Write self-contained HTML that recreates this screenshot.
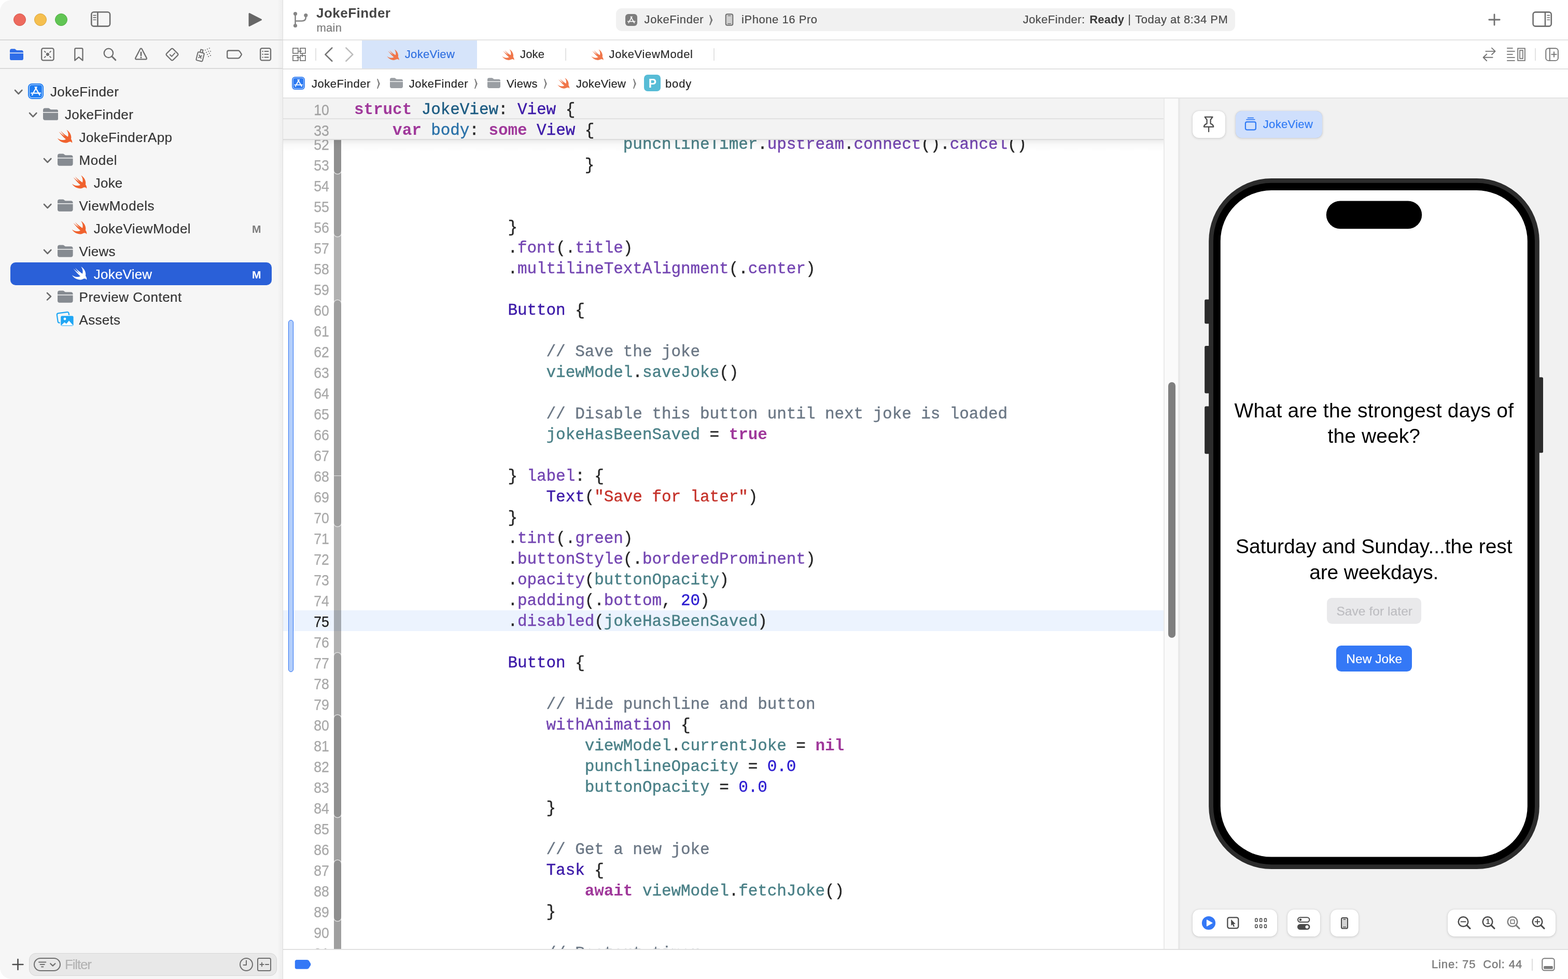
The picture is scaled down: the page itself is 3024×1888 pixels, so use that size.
<!DOCTYPE html>
<html lang="en"><head><meta charset="utf-8"><title>JokeFinder — JokeView.swift</title>
<style>
html,body{margin:0;padding:0;}
body{width:3024px;height:1888px;overflow:hidden;position:relative;background:#fff;font-family:"Liberation Sans", sans-serif;}
div,svg{box-sizing:border-box;}
.c{position:absolute;font-family:"Liberation Mono", monospace;font-size:31px;line-height:40px;letter-spacing:-0.074px;white-space:pre;color:#262626;-webkit-text-stroke:0.4px currentColor;}
.k{color:#a0399b;font-weight:700;-webkit-text-stroke:0} .t{color:#1c5b82} .s{color:#3c1aa8} .d{color:#2a71a8}
.p{color:#4a8087} .f{color:#7446b2} .m{color:#6b7785} .q{color:#c5322a} .n{color:#2b1bd0}
</style></head><body>
<div style="position:absolute;left:0px;top:0px;width:3024px;height:1888px;background:#ffffff;"></div>
<div style="position:absolute;left:0px;top:0px;width:545px;height:1888px;background:#f6f6f6;border-radius:22px 0 0 22px;"></div>
<div style="position:absolute;left:535px;top:0px;width:10px;height:1888px;background:linear-gradient(90deg,rgba(0,0,0,0),rgba(0,0,0,0.035));"></div>
<div style="position:absolute;left:545px;top:0px;width:1px;height:1888px;background:#dcdcdc;"></div>
<div style="position:absolute;left:0px;top:76px;width:545px;height:2px;background:#d9d9d9;"></div>
<div style="position:absolute;left:546px;top:76px;width:2478px;height:2px;background:#e4e4e4;"></div>
<div style="position:absolute;left:0px;top:131px;width:545px;height:2px;background:#dadada;"></div>
<div style="position:absolute;left:546px;top:132px;width:2478px;height:2px;background:#e2e2e2;"></div>
<div style="position:absolute;left:546px;top:188px;width:2478px;height:2px;background:#e4e4e4;"></div>
<div style="position:absolute;left:546px;top:1830px;width:2478px;height:2px;background:#e0e0e0;"></div>
<div style="position:absolute;left:26px;top:26px;width:24px;height:24px;border-radius:50%;background:#ed6a5e;border:1px solid #d5574c;"></div>
<div style="position:absolute;left:66px;top:26px;width:24px;height:24px;border-radius:50%;background:#f5bf4f;border:1px solid #d9a53c;"></div>
<div style="position:absolute;left:106px;top:26px;width:24px;height:24px;border-radius:50%;background:#61c554;border:1px solid #4fae43;"></div>
<svg style="position:absolute;left:173px;top:20px;" width="43" height="34" viewBox="173 20 43 34"><rect x="176.3" y="23.3" width="35.8" height="27.3" rx="4.6" fill="none" stroke="#6e6e6e" stroke-width="2.6"/><path d="M188.4 23.5V50.5" stroke="#6e6e6e" stroke-width="2.6"/><path d="M180 29.6h5M180 33.9h5M180 38.2h5" stroke="#6e6e6e" stroke-width="1.6" stroke-linecap="round"/></svg>
<svg style="position:absolute;left:476px;top:22px;" width="32" height="32" viewBox="476 22 32 32"><path d="M481 26.5L503.5 38L481 49.5Z" fill="#666" stroke="#666" stroke-width="3" stroke-linejoin="round"/></svg>
<svg style="position:absolute;left:19px;top:93.8px;" width="26" height="22.3" viewBox="0 0 30 24" preserveAspectRatio="none"><path d="M0 4.2C0 1.9 1.5 .4 3.8 .4h6.1c1.3 0 2 .3 2.9 1.1l1.2 1c.6.5 1 .7 1.9.7h10.3C28.5 3.2 30 4.7 30 7v1H0z" fill="#2f6de8"/><path d="M0 9.6h30v10.6c0 2.3-1.5 3.8-3.8 3.8H3.8C1.5 24 0 22.5 0 20.2z" fill="#2f6de8"/></svg>
<svg style="position:absolute;left:76px;top:89px;" width="32" height="32" viewBox="76 89 32 32"><rect x="80.2" y="93.2" width="23.4" height="23.2" rx="3.2" fill="none" stroke="#6e6e6e" stroke-width="2.3" stroke-linecap="round" stroke-linejoin="round"/><circle cx="91.9" cy="104.8" r="3.1" fill="#6e6e6e"/><path d="M85.3 98.3l3 3M98.5 98.3l-3 3M85.3 111.3l3-3M98.5 111.3l-3-3" fill="none" stroke="#6e6e6e" stroke-width="1.9"/></svg>
<svg style="position:absolute;left:140px;top:89px;" width="24" height="32" viewBox="140 89 24 32"><path d="M144.3 116.6V95.4a2.2 2.2 0 0 1 2.2-2.2h10.8a2.2 2.2 0 0 1 2.2 2.2v21.2l-7.6-6.4z" fill="none" stroke="#6e6e6e" stroke-width="2.3" stroke-linecap="round" stroke-linejoin="round"/></svg>
<svg style="position:absolute;left:196px;top:89px;" width="32" height="32" viewBox="196 89 32 32"><circle cx="209.4" cy="102.4" r="8.7" fill="none" stroke="#6e6e6e" stroke-width="2.3" stroke-linecap="round" stroke-linejoin="round"/><path d="M215.8 108.8l7 7" fill="none" stroke="#6e6e6e" stroke-width="3" stroke-linecap="round"/></svg>
<svg style="position:absolute;left:256px;top:89px;" width="32" height="32" viewBox="256 89 32 32"><path d="M270.5 94.3a1.7 1.7 0 0 1 3 0l9.2 17.6a1.7 1.7 0 0 1-1.5 2.5h-18.4a1.7 1.7 0 0 1-1.5-2.5z" fill="none" stroke="#6e6e6e" stroke-width="2.3" stroke-linecap="round" stroke-linejoin="round"/><path d="M272 100.9v6.1" fill="none" stroke="#6e6e6e" stroke-width="2.8" stroke-linecap="round"/><circle cx="272" cy="110.9" r="1.55" fill="#6e6e6e"/></svg>
<svg style="position:absolute;left:316px;top:89px;" width="32" height="32" viewBox="316 89 32 32"><path d="M330.3 94.3a2.4 2.4 0 0 1 3.4 0l9 9a2.4 2.4 0 0 1 0 3.4l-9 9a2.4 2.4 0 0 1-3.4 0l-9-9a2.4 2.4 0 0 1 0-3.4z" fill="none" stroke="#6e6e6e" stroke-width="2.3" stroke-linecap="round" stroke-linejoin="round"/><path d="M327.8 105.5l3.4 3.3 5.9-6.5" fill="none" stroke="#6e6e6e" stroke-width="2" stroke-linecap="round" stroke-linejoin="round"/></svg>
<svg style="position:absolute;left:374px;top:88px;" width="36" height="34" viewBox="374 88 36 34"><g transform="translate(-1.4 0.2) rotate(14 388 108)"><rect x="381.5" y="101" width="12.5" height="16.5" rx="2.2" fill="none" stroke="#6e6e6e" stroke-width="2" stroke-linecap="round" stroke-linejoin="round"/><path d="M385.6 101V95.4H390V101" fill="none" stroke="#6e6e6e" stroke-width="2" stroke-linecap="round" stroke-linejoin="round"/><path d="M385.3 106.8l4.8 4.8M390.1 106.8l-4.8 4.8" fill="none" stroke="#6e6e6e" stroke-width="2" stroke-linecap="round" stroke-linejoin="round"/></g><g fill="#6e6e6e"><rect x="403.0" y="92.0" width="1.8" height="1.8" rx=".4"/><rect x="399.2" y="93.8" width="1.8" height="1.8" rx=".4"/><rect x="395.0" y="95.8" width="1.8" height="1.8" rx=".4"/><rect x="401.2" y="98.0" width="1.8" height="1.8" rx=".4"/><rect x="405.1" y="98.0" width="1.8" height="1.8" rx=".4"/><rect x="397.2" y="100.1" width="1.8" height="1.8" rx=".4"/><rect x="403.0" y="101.9" width="1.8" height="1.8" rx=".4"/><rect x="399.2" y="104.1" width="1.8" height="1.8" rx=".4"/><rect x="405.1" y="106.1" width="1.8" height="1.8" rx=".4"/><rect x="401.2" y="108.1" width="1.8" height="1.8" rx=".4"/></g></svg>
<svg style="position:absolute;left:434px;top:92px;" width="36" height="26" viewBox="434 92 36 26"><path d="M441 97.5H459Q461 97.5 462.2 99.2L465.6 104.2Q466.2 105 465.6 105.8L462.2 110.8Q461 112.4 459 112.4H441Q438.2 112.4 438.2 109.6V100.3Q438.2 97.5 441 97.5Z" fill="none" stroke="#6e6e6e" stroke-width="2.3" stroke-linecap="round" stroke-linejoin="round"/></svg>
<svg style="position:absolute;left:498px;top:89px;" width="28" height="32" viewBox="498 89 28 32"><rect x="502.2" y="93.2" width="19.8" height="23.2" rx="3" fill="none" stroke="#6e6e6e" stroke-width="2.3" stroke-linecap="round" stroke-linejoin="round"/><path d="M510.5 99h7M510.5 104.8h7M510.5 110.6h7" fill="none" stroke="#6e6e6e" stroke-width="2" stroke-linecap="round" stroke-linejoin="round"/><circle cx="506.6" cy="99" r="1.2" fill="#6e6e6e"/><circle cx="506.6" cy="104.8" r="1.2" fill="#6e6e6e"/><circle cx="506.6" cy="110.6" r="1.2" fill="#6e6e6e"/></svg>
<svg style="position:absolute;left:562px;top:19px;" width="36" height="38" viewBox="562 19 36 38"><circle cx="569.5" cy="26.5" r="3.6" fill="#858585"/><circle cx="569.5" cy="49.5" r="3.6" fill="#858585"/><circle cx="589.8" cy="29.5" r="3.6" fill="#858585"/><path d="M569.5 26.5V49.5M569.5 40.5h12.3Q589.8 40.5 589.8 33.5V29.5" fill="none" stroke="#858585" stroke-width="2.6" stroke-linejoin="round"/></svg>
<div style="position:absolute;left:610.00px;top:11.99px;font-family:'Liberation Sans', sans-serif;font-size:26px;line-height:26px;font-weight:700;color:#464646;white-space:pre;letter-spacing:0.476px;">JokeFinder</div>
<div style="position:absolute;left:610.50px;top:43.38px;font-family:'Liberation Sans', sans-serif;font-size:22px;line-height:22px;font-weight:400;color:#7c7c7c;white-space:pre;letter-spacing:0.271px;-webkit-text-stroke:0.22px currentColor;">main</div>
<div style="position:absolute;left:1188px;top:16px;width:1193.5px;height:43.6px;background:#f1f1f1;border-radius:11px;"></div>
<svg style="position:absolute;left:1206px;top:26.5px;" width="23" height="23" viewBox="0 0 30 30"><rect x="0" y="0" width="30" height="30" rx="7.4" fill="#7d7d7d"/><g stroke="#fff" stroke-width="2.2" stroke-linecap="round" fill="none"><path d="M16.7 6.9L10.3 18"/><path d="M13.7 6.9L22.6 22.3"/><path d="M6.2 18.7H24.2"/><path d="M8.9 20.9L8.2 22.2"/></g></svg>
<div style="position:absolute;left:1242.60px;top:27.48px;font-family:'Liberation Sans', sans-serif;font-size:22px;line-height:22px;font-weight:400;color:#4a4a4a;white-space:pre;letter-spacing:0.573px;-webkit-text-stroke:0.22px currentColor;">JokeFinder</div>
<svg style="position:absolute;left:1367.4px;top:27.8px;" width="8.4" height="21.6" viewBox="-1 -1 8.4 21.6"><path d="M0 0L1.92 0L6.4 9.8L1.92 19.6L0 19.6L3.01 9.8Z" fill="#777777"/></svg>
<svg style="position:absolute;left:1396px;top:24px;" width="22" height="28" viewBox="1396 24 22 28"><rect x="1399.7" y="27.2" width="13.6" height="21.6" rx="3" fill="#cfcfcf" stroke="#6f6f6f" stroke-width="2"/><path d="M1404.3 30.4h4.4M1403.8 45.7h5.4" stroke="#6f6f6f" stroke-width="1.4" stroke-linecap="round"/></svg>
<div style="position:absolute;left:1430.00px;top:27.48px;font-family:'Liberation Sans', sans-serif;font-size:22px;line-height:22px;font-weight:400;color:#4a4a4a;white-space:pre;letter-spacing:0.547px;-webkit-text-stroke:0.22px currentColor;">iPhone 16 Pro</div>
<div style="position:absolute;left:1972.70px;top:27.28px;font-family:'Liberation Sans', sans-serif;font-size:22px;line-height:22px;font-weight:400;color:#4a4a4a;white-space:pre;letter-spacing:0.455px;-webkit-text-stroke:0.22px currentColor;">JokeFinder:</div>
<div style="position:absolute;left:2101.30px;top:27.28px;font-family:'Liberation Sans', sans-serif;font-size:22px;line-height:22px;font-weight:700;color:#3a3a3a;white-space:pre;letter-spacing:0.163px;">Ready</div>
<div style="position:absolute;left:2175.20px;top:25.98px;font-family:'Liberation Sans', sans-serif;font-size:22px;line-height:22px;font-weight:400;color:#4a4a4a;white-space:pre;-webkit-text-stroke:0.22px currentColor;">|</div>
<div style="position:absolute;left:2189.30px;top:27.28px;font-family:'Liberation Sans', sans-serif;font-size:22px;line-height:22px;font-weight:400;color:#4a4a4a;white-space:pre;letter-spacing:0.485px;-webkit-text-stroke:0.22px currentColor;">Today at 8:34 PM</div>
<svg style="position:absolute;left:2866px;top:22px;" width="32" height="32" viewBox="2866 22 32 32"><path d="M2871.8 38h20.4M2882 27.8v20.4" stroke="#707070" stroke-width="2.8" stroke-linecap="round"/></svg>
<svg style="position:absolute;left:2952px;top:19px;" width="44" height="36" viewBox="2952 19 44 36"><rect x="2956.6" y="23.4" width="35.2" height="27.2" rx="4.6" fill="none" stroke="#6e6e6e" stroke-width="2.6"/><path d="M2980 23.5V50.5" stroke="#6e6e6e" stroke-width="2.6"/><path d="M2984 29.6h4.6M2984 34h4.6M2984 38.3h4.6" stroke="#6e6e6e" stroke-width="1.6" stroke-linecap="round"/></svg>
<svg style="position:absolute;left:562px;top:90px;" width="30" height="30" viewBox="562 90 30 30"><rect x="564.95" y="92.95" width="9.9" height="9.9" fill="none" stroke="#737373" stroke-width="1.7"/><rect x="579.05" y="92.95" width="9.9" height="9.9" fill="none" stroke="#737373" stroke-width="1.7"/><rect x="564.95" y="107.05" width="9.9" height="9.9" fill="none" stroke="#737373" stroke-width="1.7"/><rect x="579.05" y="107.05" width="9.9" height="9.9" fill="none" stroke="#737373" stroke-width="1.7"/><path d="M575.5 98.9h6.4M583 103.2v6.5M572.3 110.8h6.4" stroke="#737373" stroke-width="1.7" fill="none"/></svg>
<div style="position:absolute;left:608px;top:93px;width:2px;height:24px;background:#e3e3e3;"></div>
<svg style="position:absolute;left:622px;top:88px;" width="24" height="34" viewBox="622 88 24 34"><path d="M640.3 92.4L627.4 105.1L640.3 117.8" fill="none" stroke="#757575" stroke-width="2.7" stroke-linecap="round" stroke-linejoin="round"/></svg>
<svg style="position:absolute;left:662px;top:88px;" width="24" height="34" viewBox="662 88 24 34"><path d="M667.4 92.4L680.3 105.1L667.4 117.8" fill="none" stroke="#bdbdbd" stroke-width="2.7" stroke-linecap="round" stroke-linejoin="round"/></svg>
<div style="position:absolute;left:698px;top:78px;width:222px;height:54px;background:#d6e4fa;"></div>
<svg style="position:absolute;left:746px;top:94.5px;overflow:visible;" width="24" height="21.5" viewBox="2.3 3.3 18.4 16.7"><path d="M13.543 3.41c4.114 2.47 6.545 7.162 5.549 11.131-.024.093-.05.181-.076.272l.002.001c2.062 2.538 1.5 5.258 1.236 4.745-1.072-2.086-3.066-1.568-4.088-1.043a6.803 6.803 0 0 1-.281.158l-.02.012-.002.002c-2.115 1.123-4.957 1.205-7.812-.022a12.568 12.568 0 0 1-5.64-4.838c.649.48 1.35.902 2.097 1.252 3.019 1.414 6.051 1.311 8.197-.002C9.651 12.73 7.101 9.67 5.146 7.191a10.628 10.628 0 0 1-1.005-1.384c2.34 2.142 6.038 4.83 7.365 5.576C8.69 8.408 6.208 4.743 6.324 4.86c4.436 4.47 8.528 6.996 8.528 6.996.154.085.27.154.36.213.085-.215.16-.437.224-.668.708-2.588-.09-5.548-1.893-7.992z" fill="#f0764a"/></svg>
<div style="position:absolute;left:780.80px;top:94.48px;font-family:'Liberation Sans', sans-serif;font-size:22px;line-height:22px;font-weight:400;color:#2f6fe0;white-space:pre;letter-spacing:0.319px;-webkit-text-stroke:0.22px currentColor;">JokeView</div>
<svg style="position:absolute;left:968px;top:94.5px;overflow:visible;" width="24" height="21.5" viewBox="2.3 3.3 18.4 16.7"><path d="M13.543 3.41c4.114 2.47 6.545 7.162 5.549 11.131-.024.093-.05.181-.076.272l.002.001c2.062 2.538 1.5 5.258 1.236 4.745-1.072-2.086-3.066-1.568-4.088-1.043a6.803 6.803 0 0 1-.281.158l-.02.012-.002.002c-2.115 1.123-4.957 1.205-7.812-.022a12.568 12.568 0 0 1-5.64-4.838c.649.48 1.35.902 2.097 1.252 3.019 1.414 6.051 1.311 8.197-.002C9.651 12.73 7.101 9.67 5.146 7.191a10.628 10.628 0 0 1-1.005-1.384c2.34 2.142 6.038 4.83 7.365 5.576C8.69 8.408 6.208 4.743 6.324 4.86c4.436 4.47 8.528 6.996 8.528 6.996.154.085.27.154.36.213.085-.215.16-.437.224-.668.708-2.588-.09-5.548-1.893-7.992z" fill="#f0764a"/></svg>
<div style="position:absolute;left:1003.00px;top:94.48px;font-family:'Liberation Sans', sans-serif;font-size:22px;line-height:22px;font-weight:400;color:#2b2b2b;white-space:pre;letter-spacing:0.172px;-webkit-text-stroke:0.22px currentColor;">Joke</div>
<div style="position:absolute;left:1090px;top:93px;width:2px;height:24px;background:#e3e3e3;"></div>
<svg style="position:absolute;left:1140px;top:94.5px;overflow:visible;" width="24" height="21.5" viewBox="2.3 3.3 18.4 16.7"><path d="M13.543 3.41c4.114 2.47 6.545 7.162 5.549 11.131-.024.093-.05.181-.076.272l.002.001c2.062 2.538 1.5 5.258 1.236 4.745-1.072-2.086-3.066-1.568-4.088-1.043a6.803 6.803 0 0 1-.281.158l-.02.012-.002.002c-2.115 1.123-4.957 1.205-7.812-.022a12.568 12.568 0 0 1-5.64-4.838c.649.48 1.35.902 2.097 1.252 3.019 1.414 6.051 1.311 8.197-.002C9.651 12.73 7.101 9.67 5.146 7.191a10.628 10.628 0 0 1-1.005-1.384c2.34 2.142 6.038 4.83 7.365 5.576C8.69 8.408 6.208 4.743 6.324 4.86c4.436 4.47 8.528 6.996 8.528 6.996.154.085.27.154.36.213.085-.215.16-.437.224-.668.708-2.588-.09-5.548-1.893-7.992z" fill="#f0764a"/></svg>
<div style="position:absolute;left:1174.50px;top:94.48px;font-family:'Liberation Sans', sans-serif;font-size:22px;line-height:22px;font-weight:400;color:#2b2b2b;white-space:pre;letter-spacing:0.651px;-webkit-text-stroke:0.22px currentColor;">JokeViewModel</div>
<div style="position:absolute;left:1376px;top:93px;width:2px;height:24px;background:#e3e3e3;"></div>
<svg style="position:absolute;left:2856px;top:88px;" width="32" height="34" viewBox="2856 88 32 34"><path d="M2865.4 98.9H2883.6M2877 92.6L2883.6 98.9L2877 105.3" fill="none" stroke="#737373" stroke-width="1.9" stroke-linecap="round" stroke-linejoin="round"/><path d="M2878.6 110.8H2860.6M2867.2 104.5L2860.6 110.8L2867.2 117.2" fill="none" stroke="#737373" stroke-width="1.9" stroke-linecap="round" stroke-linejoin="round"/></svg>
<svg style="position:absolute;left:2902px;top:88px;" width="44" height="34" viewBox="2902 88 44 34"><path d="M2906.2 92.9h11.4M2906.2 98.9h15.4M2906.2 104.9h11.4M2906.2 110.9h15.4M2906.2 116.9h15.4" stroke="#737373" stroke-width="1.8" fill="none"/><rect x="2927.2" y="93.3" width="13.7" height="23.5" fill="none" stroke="#737373" stroke-width="1.8"/><rect x="2931.1" y="97.1" width="5.8" height="15.8" fill="none" stroke="#737373" stroke-width="1.7"/></svg>
<div style="position:absolute;left:2960px;top:93px;width:2px;height:24px;background:#e3e3e3;"></div>
<svg style="position:absolute;left:2976px;top:88px;" width="34" height="34" viewBox="2976 88 34 34"><rect x="2981.3" y="93.3" width="23.6" height="23.6" rx="5" fill="none" stroke="#737373" stroke-width="1.9" stroke-linecap="round" stroke-linejoin="round"/><path d="M2988.8 93.5V116.7M2992.2 104.9h9.6M2997 100.1v9.6" fill="none" stroke="#737373" stroke-width="1.9" stroke-linecap="round" stroke-linejoin="round"/></svg>
<svg style="position:absolute;left:562.8px;top:147.8px;" width="25" height="25" viewBox="0 0 30 30"><rect x="0" y="0" width="30" height="30" rx="7.4" fill="#2c7af2"/><rect x="2.5" y="2.5" width="25" height="25" rx="4.6" fill="none" stroke="#fff" stroke-width="1.1" opacity=".8"/><g stroke="#fff" stroke-width="2.2" stroke-linecap="round" fill="none"><path d="M16.7 6.9L10.3 18"/><path d="M13.7 6.9L22.6 22.3"/><path d="M6.2 18.7H24.2"/><path d="M8.9 20.9L8.2 22.2"/></g></svg>
<div style="position:absolute;left:601.00px;top:150.58px;font-family:'Liberation Sans', sans-serif;font-size:22px;line-height:22px;font-weight:400;color:#262626;white-space:pre;letter-spacing:0.506px;-webkit-text-stroke:0.22px currentColor;">JokeFinder</div>
<svg style="position:absolute;left:726.2px;top:150.8px;" width="7.8" height="21" viewBox="-1 -1 7.8 21"><path d="M0 0L1.74 0L5.8 9.5L1.74 19L0 19L2.73 9.5Z" fill="#7f7f7f"/></svg>
<svg style="position:absolute;left:752px;top:150px;" width="25" height="20" viewBox="0 0 30 24" preserveAspectRatio="none"><path d="M0 4.2C0 1.9 1.5 .4 3.8 .4h6.1c1.3 0 2 .3 2.9 1.1l1.2 1c.6.5 1 .7 1.9.7h10.3C28.5 3.2 30 4.7 30 7v1H0z" fill="#9a9ea3"/><path d="M0 9.6h30v10.6c0 2.3-1.5 3.8-3.8 3.8H3.8C1.5 24 0 22.5 0 20.2z" fill="#9a9ea3"/></svg>
<div style="position:absolute;left:788.80px;top:150.58px;font-family:'Liberation Sans', sans-serif;font-size:22px;line-height:22px;font-weight:400;color:#262626;white-space:pre;letter-spacing:0.562px;-webkit-text-stroke:0.22px currentColor;">JokeFinder</div>
<svg style="position:absolute;left:914px;top:150.8px;" width="7.8" height="21" viewBox="-1 -1 7.8 21"><path d="M0 0L1.74 0L5.8 9.5L1.74 19L0 19L2.73 9.5Z" fill="#7f7f7f"/></svg>
<svg style="position:absolute;left:940px;top:150px;" width="25" height="20" viewBox="0 0 30 24" preserveAspectRatio="none"><path d="M0 4.2C0 1.9 1.5 .4 3.8 .4h6.1c1.3 0 2 .3 2.9 1.1l1.2 1c.6.5 1 .7 1.9.7h10.3C28.5 3.2 30 4.7 30 7v1H0z" fill="#9a9ea3"/><path d="M0 9.6h30v10.6c0 2.3-1.5 3.8-3.8 3.8H3.8C1.5 24 0 22.5 0 20.2z" fill="#9a9ea3"/></svg>
<div style="position:absolute;left:977.00px;top:150.58px;font-family:'Liberation Sans', sans-serif;font-size:22px;line-height:22px;font-weight:400;color:#262626;white-space:pre;letter-spacing:0.301px;-webkit-text-stroke:0.22px currentColor;">Views</div>
<svg style="position:absolute;left:1048px;top:150.8px;" width="7.8" height="21" viewBox="-1 -1 7.8 21"><path d="M0 0L1.74 0L5.8 9.5L1.74 19L0 19L2.73 9.5Z" fill="#7f7f7f"/></svg>
<svg style="position:absolute;left:1074.6px;top:149.8px;overflow:visible;" width="23.6" height="21.2" viewBox="2.3 3.3 18.4 16.7"><path d="M13.543 3.41c4.114 2.47 6.545 7.162 5.549 11.131-.024.093-.05.181-.076.272l.002.001c2.062 2.538 1.5 5.258 1.236 4.745-1.072-2.086-3.066-1.568-4.088-1.043a6.803 6.803 0 0 1-.281.158l-.02.012-.002.002c-2.115 1.123-4.957 1.205-7.812-.022a12.568 12.568 0 0 1-5.64-4.838c.649.48 1.35.902 2.097 1.252 3.019 1.414 6.051 1.311 8.197-.002C9.651 12.73 7.101 9.67 5.146 7.191a10.628 10.628 0 0 1-1.005-1.384c2.34 2.142 6.038 4.83 7.365 5.576C8.69 8.408 6.208 4.743 6.324 4.86c4.436 4.47 8.528 6.996 8.528 6.996.154.085.27.154.36.213.085-.215.16-.437.224-.668.708-2.588-.09-5.548-1.893-7.992z" fill="#f0764a"/></svg>
<div style="position:absolute;left:1111.00px;top:150.58px;font-family:'Liberation Sans', sans-serif;font-size:22px;line-height:22px;font-weight:400;color:#262626;white-space:pre;letter-spacing:0.319px;-webkit-text-stroke:0.22px currentColor;">JokeView</div>
<svg style="position:absolute;left:1220px;top:150.8px;" width="7.8" height="21" viewBox="-1 -1 7.8 21"><path d="M0 0L1.74 0L5.8 9.5L1.74 19L0 19L2.73 9.5Z" fill="#7f7f7f"/></svg>
<div style="position:absolute;left:1242px;top:143.9px;width:32px;height:32.1px;background:#57bcd6;border-radius:7px;"></div>
<div style="position:absolute;left:1250.80px;top:149.53px;font-family:'Liberation Sans', sans-serif;font-size:23px;line-height:23px;font-weight:700;color:#ffffff;white-space:pre;">P</div>
<div style="position:absolute;left:1283.00px;top:150.58px;font-family:'Liberation Sans', sans-serif;font-size:22px;line-height:22px;font-weight:400;color:#262626;white-space:pre;letter-spacing:0.860px;-webkit-text-stroke:0.22px currentColor;">body</div>
<div style="position:absolute;left:20px;top:506px;width:504px;height:44px;background:#2a60d8;border-radius:10px;"></div>
<svg style="position:absolute;left:27.3px;top:171.5px;" width="17.4" height="11" viewBox="-2 -2 17.4 11"><path d="M0 0L6.7 7L13.4 0" fill="none" stroke="#6b6b6b" stroke-width="2.6" stroke-linecap="round" stroke-linejoin="round"/></svg>
<svg style="position:absolute;left:54px;top:161px;" width="30" height="30" viewBox="0 0 30 30"><rect x="0" y="0" width="30" height="30" rx="7.4" fill="#1d7cf2"/><rect x="2.5" y="2.5" width="25" height="25" rx="4.6" fill="none" stroke="#fff" stroke-width="1.1" opacity=".8"/><g stroke="#fff" stroke-width="2.2" stroke-linecap="round" fill="none"><path d="M16.7 6.9L10.3 18"/><path d="M13.7 6.9L22.6 22.3"/><path d="M6.2 18.7H24.2"/><path d="M8.9 20.9L8.2 22.2"/></g></svg>
<div style="position:absolute;left:97.00px;top:163.99px;font-family:'Liberation Sans', sans-serif;font-size:26px;line-height:26px;font-weight:400;color:#363636;white-space:pre;letter-spacing:0.353px;-webkit-text-stroke:0.22px currentColor;">JokeFinder</div>
<svg style="position:absolute;left:55.3px;top:215.5px;" width="17.4" height="11" viewBox="-2 -2 17.4 11"><path d="M0 0L6.7 7L13.4 0" fill="none" stroke="#6b6b6b" stroke-width="2.6" stroke-linecap="round" stroke-linejoin="round"/></svg>
<svg style="position:absolute;left:82.8px;top:208.3px;" width="29.6" height="23.8" viewBox="0 0 30 24" preserveAspectRatio="none"><path d="M0 4.2C0 1.9 1.5 .4 3.8 .4h6.1c1.3 0 2 .3 2.9 1.1l1.2 1c.6.5 1 .7 1.9.7h10.3C28.5 3.2 30 4.7 30 7v1H0z" fill="#868b91"/><path d="M0 9.6h30v10.6c0 2.3-1.5 3.8-3.8 3.8H3.8C1.5 24 0 22.5 0 20.2z" fill="#868b91"/></svg>
<div style="position:absolute;left:125.00px;top:207.99px;font-family:'Liberation Sans', sans-serif;font-size:26px;line-height:26px;font-weight:400;color:#363636;white-space:pre;letter-spacing:0.353px;-webkit-text-stroke:0.22px currentColor;">JokeFinder</div>
<svg style="position:absolute;left:110.3px;top:250.3px;overflow:visible;" width="30.2" height="26.2" viewBox="2.3 3.3 18.4 16.7"><path d="M13.543 3.41c4.114 2.47 6.545 7.162 5.549 11.131-.024.093-.05.181-.076.272l.002.001c2.062 2.538 1.5 5.258 1.236 4.745-1.072-2.086-3.066-1.568-4.088-1.043a6.803 6.803 0 0 1-.281.158l-.02.012-.002.002c-2.115 1.123-4.957 1.205-7.812-.022a12.568 12.568 0 0 1-5.64-4.838c.649.48 1.35.902 2.097 1.252 3.019 1.414 6.051 1.311 8.197-.002C9.651 12.73 7.101 9.67 5.146 7.191a10.628 10.628 0 0 1-1.005-1.384c2.34 2.142 6.038 4.83 7.365 5.576C8.69 8.408 6.208 4.743 6.324 4.86c4.436 4.47 8.528 6.996 8.528 6.996.154.085.27.154.36.213.085-.215.16-.437.224-.668.708-2.588-.09-5.548-1.893-7.992z" fill="#f0622e"/></svg>
<div style="position:absolute;left:152.60px;top:251.99px;font-family:'Liberation Sans', sans-serif;font-size:26px;line-height:26px;font-weight:400;color:#363636;white-space:pre;letter-spacing:0.384px;-webkit-text-stroke:0.22px currentColor;">JokeFinderApp</div>
<svg style="position:absolute;left:83.3px;top:303.5px;" width="17.4" height="11" viewBox="-2 -2 17.4 11"><path d="M0 0L6.7 7L13.4 0" fill="none" stroke="#6b6b6b" stroke-width="2.6" stroke-linecap="round" stroke-linejoin="round"/></svg>
<svg style="position:absolute;left:111px;top:296.3px;" width="29.6" height="23.8" viewBox="0 0 30 24" preserveAspectRatio="none"><path d="M0 4.2C0 1.9 1.5 .4 3.8 .4h6.1c1.3 0 2 .3 2.9 1.1l1.2 1c.6.5 1 .7 1.9.7h10.3C28.5 3.2 30 4.7 30 7v1H0z" fill="#868b91"/><path d="M0 9.6h30v10.6c0 2.3-1.5 3.8-3.8 3.8H3.8C1.5 24 0 22.5 0 20.2z" fill="#868b91"/></svg>
<div style="position:absolute;left:152.60px;top:295.99px;font-family:'Liberation Sans', sans-serif;font-size:26px;line-height:26px;font-weight:400;color:#363636;white-space:pre;letter-spacing:0.543px;-webkit-text-stroke:0.22px currentColor;">Model</div>
<svg style="position:absolute;left:138px;top:338.3px;overflow:visible;" width="30.2" height="26.2" viewBox="2.3 3.3 18.4 16.7"><path d="M13.543 3.41c4.114 2.47 6.545 7.162 5.549 11.131-.024.093-.05.181-.076.272l.002.001c2.062 2.538 1.5 5.258 1.236 4.745-1.072-2.086-3.066-1.568-4.088-1.043a6.803 6.803 0 0 1-.281.158l-.02.012-.002.002c-2.115 1.123-4.957 1.205-7.812-.022a12.568 12.568 0 0 1-5.64-4.838c.649.48 1.35.902 2.097 1.252 3.019 1.414 6.051 1.311 8.197-.002C9.651 12.73 7.101 9.67 5.146 7.191a10.628 10.628 0 0 1-1.005-1.384c2.34 2.142 6.038 4.83 7.365 5.576C8.69 8.408 6.208 4.743 6.324 4.86c4.436 4.47 8.528 6.996 8.528 6.996.154.085.27.154.36.213.085-.215.16-.437.224-.668.708-2.588-.09-5.548-1.893-7.992z" fill="#f0622e"/></svg>
<div style="position:absolute;left:180.80px;top:339.99px;font-family:'Liberation Sans', sans-serif;font-size:26px;line-height:26px;font-weight:400;color:#363636;white-space:pre;letter-spacing:0.193px;-webkit-text-stroke:0.22px currentColor;">Joke</div>
<svg style="position:absolute;left:83.3px;top:391.5px;" width="17.4" height="11" viewBox="-2 -2 17.4 11"><path d="M0 0L6.7 7L13.4 0" fill="none" stroke="#6b6b6b" stroke-width="2.6" stroke-linecap="round" stroke-linejoin="round"/></svg>
<svg style="position:absolute;left:111px;top:384.3px;" width="29.6" height="23.8" viewBox="0 0 30 24" preserveAspectRatio="none"><path d="M0 4.2C0 1.9 1.5 .4 3.8 .4h6.1c1.3 0 2 .3 2.9 1.1l1.2 1c.6.5 1 .7 1.9.7h10.3C28.5 3.2 30 4.7 30 7v1H0z" fill="#868b91"/><path d="M0 9.6h30v10.6c0 2.3-1.5 3.8-3.8 3.8H3.8C1.5 24 0 22.5 0 20.2z" fill="#868b91"/></svg>
<div style="position:absolute;left:152.60px;top:383.99px;font-family:'Liberation Sans', sans-serif;font-size:26px;line-height:26px;font-weight:400;color:#363636;white-space:pre;letter-spacing:0.589px;-webkit-text-stroke:0.22px currentColor;">ViewModels</div>
<svg style="position:absolute;left:138px;top:426.3px;overflow:visible;" width="30.2" height="26.2" viewBox="2.3 3.3 18.4 16.7"><path d="M13.543 3.41c4.114 2.47 6.545 7.162 5.549 11.131-.024.093-.05.181-.076.272l.002.001c2.062 2.538 1.5 5.258 1.236 4.745-1.072-2.086-3.066-1.568-4.088-1.043a6.803 6.803 0 0 1-.281.158l-.02.012-.002.002c-2.115 1.123-4.957 1.205-7.812-.022a12.568 12.568 0 0 1-5.64-4.838c.649.48 1.35.902 2.097 1.252 3.019 1.414 6.051 1.311 8.197-.002C9.651 12.73 7.101 9.67 5.146 7.191a10.628 10.628 0 0 1-1.005-1.384c2.34 2.142 6.038 4.83 7.365 5.576C8.69 8.408 6.208 4.743 6.324 4.86c4.436 4.47 8.528 6.996 8.528 6.996.154.085.27.154.36.213.085-.215.16-.437.224-.668.708-2.588-.09-5.548-1.893-7.992z" fill="#f0622e"/></svg>
<div style="position:absolute;left:180.80px;top:427.99px;font-family:'Liberation Sans', sans-serif;font-size:26px;line-height:26px;font-weight:400;color:#363636;white-space:pre;letter-spacing:0.431px;-webkit-text-stroke:0.22px currentColor;">JokeViewModel</div>
<div style="position:absolute;left:486.00px;top:431.22px;font-family:'Liberation Sans', sans-serif;font-size:21px;line-height:21px;font-weight:700;color:#7d7d7d;white-space:pre;">M</div>
<svg style="position:absolute;left:83.3px;top:479.5px;" width="17.4" height="11" viewBox="-2 -2 17.4 11"><path d="M0 0L6.7 7L13.4 0" fill="none" stroke="#6b6b6b" stroke-width="2.6" stroke-linecap="round" stroke-linejoin="round"/></svg>
<svg style="position:absolute;left:111px;top:472.3px;" width="29.6" height="23.8" viewBox="0 0 30 24" preserveAspectRatio="none"><path d="M0 4.2C0 1.9 1.5 .4 3.8 .4h6.1c1.3 0 2 .3 2.9 1.1l1.2 1c.6.5 1 .7 1.9.7h10.3C28.5 3.2 30 4.7 30 7v1H0z" fill="#868b91"/><path d="M0 9.6h30v10.6c0 2.3-1.5 3.8-3.8 3.8H3.8C1.5 24 0 22.5 0 20.2z" fill="#868b91"/></svg>
<div style="position:absolute;left:152.60px;top:471.99px;font-family:'Liberation Sans', sans-serif;font-size:26px;line-height:26px;font-weight:400;color:#363636;white-space:pre;letter-spacing:0.227px;-webkit-text-stroke:0.22px currentColor;">Views</div>
<svg style="position:absolute;left:138px;top:514.3px;overflow:visible;" width="30.2" height="26.2" viewBox="2.3 3.3 18.4 16.7"><path d="M13.543 3.41c4.114 2.47 6.545 7.162 5.549 11.131-.024.093-.05.181-.076.272l.002.001c2.062 2.538 1.5 5.258 1.236 4.745-1.072-2.086-3.066-1.568-4.088-1.043a6.803 6.803 0 0 1-.281.158l-.02.012-.002.002c-2.115 1.123-4.957 1.205-7.812-.022a12.568 12.568 0 0 1-5.64-4.838c.649.48 1.35.902 2.097 1.252 3.019 1.414 6.051 1.311 8.197-.002C9.651 12.73 7.101 9.67 5.146 7.191a10.628 10.628 0 0 1-1.005-1.384c2.34 2.142 6.038 4.83 7.365 5.576C8.69 8.408 6.208 4.743 6.324 4.86c4.436 4.47 8.528 6.996 8.528 6.996.154.085.27.154.36.213.085-.215.16-.437.224-.668.708-2.588-.09-5.548-1.893-7.992z" fill="#ffffff"/></svg>
<div style="position:absolute;left:180.80px;top:515.99px;font-family:'Liberation Sans', sans-serif;font-size:26px;line-height:26px;font-weight:400;color:#ffffff;white-space:pre;letter-spacing:0.212px;-webkit-text-stroke:0.22px currentColor;">JokeView</div>
<div style="position:absolute;left:486.00px;top:519.22px;font-family:'Liberation Sans', sans-serif;font-size:21px;line-height:21px;font-weight:700;color:#ffffff;white-space:pre;">M</div>
<svg style="position:absolute;left:88.9px;top:563.3px;" width="11" height="17.4" viewBox="-2 -2 11 17.4"><path d="M0 0L7 6.7L0 13.4" fill="none" stroke="#6b6b6b" stroke-width="2.6" stroke-linecap="round" stroke-linejoin="round"/></svg>
<svg style="position:absolute;left:111px;top:560.3px;" width="29.6" height="23.8" viewBox="0 0 30 24" preserveAspectRatio="none"><path d="M0 4.2C0 1.9 1.5 .4 3.8 .4h6.1c1.3 0 2 .3 2.9 1.1l1.2 1c.6.5 1 .7 1.9.7h10.3C28.5 3.2 30 4.7 30 7v1H0z" fill="#868b91"/><path d="M0 9.6h30v10.6c0 2.3-1.5 3.8-3.8 3.8H3.8C1.5 24 0 22.5 0 20.2z" fill="#868b91"/></svg>
<div style="position:absolute;left:152.60px;top:559.99px;font-family:'Liberation Sans', sans-serif;font-size:26px;line-height:26px;font-weight:400;color:#363636;white-space:pre;letter-spacing:0.495px;-webkit-text-stroke:0.22px currentColor;">Preview Content</div>
<svg style="position:absolute;left:107px;top:599px;" width="38" height="33" viewBox="107 599 38 33"><g transform="rotate(-8 120 612)"><rect x="110.6" y="603.2" width="23" height="18.5" rx="3" fill="none" stroke="#1fa6f4" stroke-width="2.2"/></g><rect x="116.5" y="608.5" width="25.8" height="20.6" rx="3.2" fill="#1fa6f4" stroke="#f6f6f6" stroke-width="1.4"/><circle cx="125" cy="615" r="2.4" fill="#fff"/><path d="M118 627.6L124.4 621.6L127.9 624.6L133 618.6L141 627.6Z" fill="#fff"/></svg>
<div style="position:absolute;left:152.60px;top:603.99px;font-family:'Liberation Sans', sans-serif;font-size:26px;line-height:26px;font-weight:400;color:#363636;white-space:pre;letter-spacing:0.294px;-webkit-text-stroke:0.22px currentColor;">Assets</div>
<svg style="position:absolute;left:20px;top:1844px;" width="30" height="32" viewBox="20 1844 30 32"><path d="M24.6 1860h19.8M34.5 1850.1v19.8" stroke="#4d4d4d" stroke-width="2.6" stroke-linecap="round"/></svg>
<div style="position:absolute;left:56px;top:1838px;width:478px;height:44px;background:#e8e8e8;border-radius:13px;border:1.5px solid #d6d6d6;"></div>
<div style="position:absolute;left:65px;top:1847px;width:52px;height:26px;border-radius:13px;border:2px solid #6e6e6e;"></div>
<svg style="position:absolute;left:72px;top:1850px;" width="40" height="20" viewBox="72 1850 40 20"><path d="M75 1855.5h13.4M77.6 1860h8.2M80 1864.5h3.4" stroke="#6e6e6e" stroke-width="1.9" stroke-linecap="round"/><path d="M97.2 1858.2l4.6 4.4 4.6-4.4" fill="none" stroke="#6e6e6e" stroke-width="2.2" stroke-linecap="round" stroke-linejoin="round"/></svg>
<div style="position:absolute;left:125.00px;top:1846.99px;font-family:'Liberation Sans', sans-serif;font-size:26px;line-height:26px;font-weight:400;color:#b3b3b3;white-space:pre;letter-spacing:-1.156px;-webkit-text-stroke:0.22px currentColor;">Filter</div>
<svg style="position:absolute;left:458px;top:1844px;" width="34" height="32" viewBox="458 1844 34 32"><circle cx="475" cy="1860" r="12" fill="none" stroke="#6e6e6e" stroke-width="2"/><path d="M475 1852.5V1861H469.5" fill="none" stroke="#6e6e6e" stroke-width="2" stroke-linecap="round" stroke-linejoin="round"/></svg>
<svg style="position:absolute;left:493px;top:1844px;" width="34" height="32" viewBox="493 1844 34 32"><rect x="497" y="1848" width="25" height="24" rx="2.5" fill="none" stroke="#6e6e6e" stroke-width="2"/><path d="M501.5 1860h7M505 1856.5v7M512 1860h6.2" stroke="#6e6e6e" stroke-width="1.9" stroke-linecap="round"/></svg>
<div style="position:absolute;left:546px;top:1177px;width:1698px;height:40px;background:#ecf3fe;"></div>
<div style="position:absolute;left:556.1px;top:617px;width:9.7px;height:679px;border-radius:5px;background:#b3cefb;border:1.9px solid #2a70f3;"></div>
<div style="position:absolute;left:601.77px;top:263.73px;font-family:'Liberation Sans', sans-serif;font-size:29.5px;line-height:29.5px;font-weight:400;color:#a8a8a8;white-space:pre;transform:scaleX(0.9);transform-origin:100% 50%;-webkit-text-stroke:0.25px currentColor;">52</div>
<div class="c" style="left:1201.84px;top:259px;"><span class="p">punchlineTimer</span>.<span class="f">upstream</span>.<span class="f">connect</span>().<span class="f">cancel</span>()</div>
<div style="position:absolute;left:601.77px;top:303.73px;font-family:'Liberation Sans', sans-serif;font-size:29.5px;line-height:29.5px;font-weight:400;color:#a8a8a8;white-space:pre;transform:scaleX(0.9);transform-origin:100% 50%;-webkit-text-stroke:0.25px currentColor;">53</div>
<div class="c" style="left:1127.72px;top:299px;">}</div>
<div style="position:absolute;left:601.77px;top:343.73px;font-family:'Liberation Sans', sans-serif;font-size:29.5px;line-height:29.5px;font-weight:400;color:#a8a8a8;white-space:pre;transform:scaleX(0.9);transform-origin:100% 50%;-webkit-text-stroke:0.25px currentColor;">54</div>
<div style="position:absolute;left:601.77px;top:383.73px;font-family:'Liberation Sans', sans-serif;font-size:29.5px;line-height:29.5px;font-weight:400;color:#a8a8a8;white-space:pre;transform:scaleX(0.9);transform-origin:100% 50%;-webkit-text-stroke:0.25px currentColor;">55</div>
<div style="position:absolute;left:601.77px;top:423.73px;font-family:'Liberation Sans', sans-serif;font-size:29.5px;line-height:29.5px;font-weight:400;color:#a8a8a8;white-space:pre;transform:scaleX(0.9);transform-origin:100% 50%;-webkit-text-stroke:0.25px currentColor;">56</div>
<div class="c" style="left:979.48px;top:419px;">}</div>
<div style="position:absolute;left:601.77px;top:463.73px;font-family:'Liberation Sans', sans-serif;font-size:29.5px;line-height:29.5px;font-weight:400;color:#a8a8a8;white-space:pre;transform:scaleX(0.9);transform-origin:100% 50%;-webkit-text-stroke:0.25px currentColor;">57</div>
<div class="c" style="left:979.48px;top:459px;">.<span class="f">font</span>(.<span class="f">title</span>)</div>
<div style="position:absolute;left:601.77px;top:503.73px;font-family:'Liberation Sans', sans-serif;font-size:29.5px;line-height:29.5px;font-weight:400;color:#a8a8a8;white-space:pre;transform:scaleX(0.9);transform-origin:100% 50%;-webkit-text-stroke:0.25px currentColor;">58</div>
<div class="c" style="left:979.48px;top:499px;">.<span class="f">multilineTextAlignment</span>(.<span class="f">center</span>)</div>
<div style="position:absolute;left:601.77px;top:543.73px;font-family:'Liberation Sans', sans-serif;font-size:29.5px;line-height:29.5px;font-weight:400;color:#a8a8a8;white-space:pre;transform:scaleX(0.9);transform-origin:100% 50%;-webkit-text-stroke:0.25px currentColor;">59</div>
<div style="position:absolute;left:601.77px;top:583.73px;font-family:'Liberation Sans', sans-serif;font-size:29.5px;line-height:29.5px;font-weight:400;color:#a8a8a8;white-space:pre;transform:scaleX(0.9);transform-origin:100% 50%;-webkit-text-stroke:0.25px currentColor;">60</div>
<div class="c" style="left:979.48px;top:579px;"><span class="s">Button</span> {</div>
<div style="position:absolute;left:601.77px;top:623.73px;font-family:'Liberation Sans', sans-serif;font-size:29.5px;line-height:29.5px;font-weight:400;color:#a8a8a8;white-space:pre;transform:scaleX(0.9);transform-origin:100% 50%;-webkit-text-stroke:0.25px currentColor;">61</div>
<div style="position:absolute;left:601.77px;top:663.73px;font-family:'Liberation Sans', sans-serif;font-size:29.5px;line-height:29.5px;font-weight:400;color:#a8a8a8;white-space:pre;transform:scaleX(0.9);transform-origin:100% 50%;-webkit-text-stroke:0.25px currentColor;">62</div>
<div class="c" style="left:1053.60px;top:659px;"><span class="m">// Save the joke</span></div>
<div style="position:absolute;left:601.77px;top:703.73px;font-family:'Liberation Sans', sans-serif;font-size:29.5px;line-height:29.5px;font-weight:400;color:#a8a8a8;white-space:pre;transform:scaleX(0.9);transform-origin:100% 50%;-webkit-text-stroke:0.25px currentColor;">63</div>
<div class="c" style="left:1053.60px;top:699px;"><span class="p">viewModel</span>.<span class="p">saveJoke</span>()</div>
<div style="position:absolute;left:601.77px;top:743.73px;font-family:'Liberation Sans', sans-serif;font-size:29.5px;line-height:29.5px;font-weight:400;color:#a8a8a8;white-space:pre;transform:scaleX(0.9);transform-origin:100% 50%;-webkit-text-stroke:0.25px currentColor;">64</div>
<div style="position:absolute;left:601.77px;top:783.73px;font-family:'Liberation Sans', sans-serif;font-size:29.5px;line-height:29.5px;font-weight:400;color:#a8a8a8;white-space:pre;transform:scaleX(0.9);transform-origin:100% 50%;-webkit-text-stroke:0.25px currentColor;">65</div>
<div class="c" style="left:1053.60px;top:779px;"><span class="m">// Disable this button until next joke is loaded</span></div>
<div style="position:absolute;left:601.77px;top:823.73px;font-family:'Liberation Sans', sans-serif;font-size:29.5px;line-height:29.5px;font-weight:400;color:#a8a8a8;white-space:pre;transform:scaleX(0.9);transform-origin:100% 50%;-webkit-text-stroke:0.25px currentColor;">66</div>
<div class="c" style="left:1053.60px;top:819px;"><span class="p">jokeHasBeenSaved</span> = <span class="k">true</span></div>
<div style="position:absolute;left:601.77px;top:863.73px;font-family:'Liberation Sans', sans-serif;font-size:29.5px;line-height:29.5px;font-weight:400;color:#a8a8a8;white-space:pre;transform:scaleX(0.9);transform-origin:100% 50%;-webkit-text-stroke:0.25px currentColor;">67</div>
<div style="position:absolute;left:601.77px;top:903.73px;font-family:'Liberation Sans', sans-serif;font-size:29.5px;line-height:29.5px;font-weight:400;color:#a8a8a8;white-space:pre;transform:scaleX(0.9);transform-origin:100% 50%;-webkit-text-stroke:0.25px currentColor;">68</div>
<div class="c" style="left:979.48px;top:899px;">} <span class="f">label</span>: {</div>
<div style="position:absolute;left:601.77px;top:943.73px;font-family:'Liberation Sans', sans-serif;font-size:29.5px;line-height:29.5px;font-weight:400;color:#a8a8a8;white-space:pre;transform:scaleX(0.9);transform-origin:100% 50%;-webkit-text-stroke:0.25px currentColor;">69</div>
<div class="c" style="left:1053.60px;top:939px;"><span class="s">Text</span>(<span class="q">"Save for later"</span>)</div>
<div style="position:absolute;left:601.77px;top:983.73px;font-family:'Liberation Sans', sans-serif;font-size:29.5px;line-height:29.5px;font-weight:400;color:#a8a8a8;white-space:pre;transform:scaleX(0.9);transform-origin:100% 50%;-webkit-text-stroke:0.25px currentColor;">70</div>
<div class="c" style="left:979.48px;top:979px;">}</div>
<div style="position:absolute;left:601.77px;top:1023.73px;font-family:'Liberation Sans', sans-serif;font-size:29.5px;line-height:29.5px;font-weight:400;color:#a8a8a8;white-space:pre;transform:scaleX(0.9);transform-origin:100% 50%;-webkit-text-stroke:0.25px currentColor;">71</div>
<div class="c" style="left:979.48px;top:1019px;">.<span class="f">tint</span>(.<span class="f">green</span>)</div>
<div style="position:absolute;left:601.77px;top:1063.73px;font-family:'Liberation Sans', sans-serif;font-size:29.5px;line-height:29.5px;font-weight:400;color:#a8a8a8;white-space:pre;transform:scaleX(0.9);transform-origin:100% 50%;-webkit-text-stroke:0.25px currentColor;">72</div>
<div class="c" style="left:979.48px;top:1059px;">.<span class="f">buttonStyle</span>(.<span class="f">borderedProminent</span>)</div>
<div style="position:absolute;left:601.77px;top:1103.73px;font-family:'Liberation Sans', sans-serif;font-size:29.5px;line-height:29.5px;font-weight:400;color:#a8a8a8;white-space:pre;transform:scaleX(0.9);transform-origin:100% 50%;-webkit-text-stroke:0.25px currentColor;">73</div>
<div class="c" style="left:979.48px;top:1099px;">.<span class="f">opacity</span>(<span class="p">buttonOpacity</span>)</div>
<div style="position:absolute;left:601.77px;top:1143.73px;font-family:'Liberation Sans', sans-serif;font-size:29.5px;line-height:29.5px;font-weight:400;color:#a8a8a8;white-space:pre;transform:scaleX(0.9);transform-origin:100% 50%;-webkit-text-stroke:0.25px currentColor;">74</div>
<div class="c" style="left:979.48px;top:1139px;">.<span class="f">padding</span>(.<span class="f">bottom</span>, <span class="n">20</span>)</div>
<div style="position:absolute;left:601.77px;top:1183.73px;font-family:'Liberation Sans', sans-serif;font-size:29.5px;line-height:29.5px;font-weight:400;color:#1a1a1a;white-space:pre;transform:scaleX(0.9);transform-origin:100% 50%;-webkit-text-stroke:0.25px currentColor;">75</div>
<div class="c" style="left:979.48px;top:1179px;">.<span class="f">disabled</span>(<span class="p">jokeHasBeenSaved</span>)</div>
<div style="position:absolute;left:601.77px;top:1223.73px;font-family:'Liberation Sans', sans-serif;font-size:29.5px;line-height:29.5px;font-weight:400;color:#a8a8a8;white-space:pre;transform:scaleX(0.9);transform-origin:100% 50%;-webkit-text-stroke:0.25px currentColor;">76</div>
<div style="position:absolute;left:601.77px;top:1263.73px;font-family:'Liberation Sans', sans-serif;font-size:29.5px;line-height:29.5px;font-weight:400;color:#a8a8a8;white-space:pre;transform:scaleX(0.9);transform-origin:100% 50%;-webkit-text-stroke:0.25px currentColor;">77</div>
<div class="c" style="left:979.48px;top:1259px;"><span class="s">Button</span> {</div>
<div style="position:absolute;left:601.77px;top:1303.73px;font-family:'Liberation Sans', sans-serif;font-size:29.5px;line-height:29.5px;font-weight:400;color:#a8a8a8;white-space:pre;transform:scaleX(0.9);transform-origin:100% 50%;-webkit-text-stroke:0.25px currentColor;">78</div>
<div style="position:absolute;left:601.77px;top:1343.73px;font-family:'Liberation Sans', sans-serif;font-size:29.5px;line-height:29.5px;font-weight:400;color:#a8a8a8;white-space:pre;transform:scaleX(0.9);transform-origin:100% 50%;-webkit-text-stroke:0.25px currentColor;">79</div>
<div class="c" style="left:1053.60px;top:1339px;"><span class="m">// Hide punchline and button</span></div>
<div style="position:absolute;left:601.77px;top:1383.73px;font-family:'Liberation Sans', sans-serif;font-size:29.5px;line-height:29.5px;font-weight:400;color:#a8a8a8;white-space:pre;transform:scaleX(0.9);transform-origin:100% 50%;-webkit-text-stroke:0.25px currentColor;">80</div>
<div class="c" style="left:1053.60px;top:1379px;"><span class="f">withAnimation</span> {</div>
<div style="position:absolute;left:601.77px;top:1423.73px;font-family:'Liberation Sans', sans-serif;font-size:29.5px;line-height:29.5px;font-weight:400;color:#a8a8a8;white-space:pre;transform:scaleX(0.9);transform-origin:100% 50%;-webkit-text-stroke:0.25px currentColor;">81</div>
<div class="c" style="left:1127.72px;top:1419px;"><span class="p">viewModel</span>.<span class="p">currentJoke</span> = <span class="k">nil</span></div>
<div style="position:absolute;left:601.77px;top:1463.73px;font-family:'Liberation Sans', sans-serif;font-size:29.5px;line-height:29.5px;font-weight:400;color:#a8a8a8;white-space:pre;transform:scaleX(0.9);transform-origin:100% 50%;-webkit-text-stroke:0.25px currentColor;">82</div>
<div class="c" style="left:1127.72px;top:1459px;"><span class="p">punchlineOpacity</span> = <span class="n">0.0</span></div>
<div style="position:absolute;left:601.77px;top:1503.73px;font-family:'Liberation Sans', sans-serif;font-size:29.5px;line-height:29.5px;font-weight:400;color:#a8a8a8;white-space:pre;transform:scaleX(0.9);transform-origin:100% 50%;-webkit-text-stroke:0.25px currentColor;">83</div>
<div class="c" style="left:1127.72px;top:1499px;"><span class="p">buttonOpacity</span> = <span class="n">0.0</span></div>
<div style="position:absolute;left:601.77px;top:1543.73px;font-family:'Liberation Sans', sans-serif;font-size:29.5px;line-height:29.5px;font-weight:400;color:#a8a8a8;white-space:pre;transform:scaleX(0.9);transform-origin:100% 50%;-webkit-text-stroke:0.25px currentColor;">84</div>
<div class="c" style="left:1053.60px;top:1539px;">}</div>
<div style="position:absolute;left:601.77px;top:1583.73px;font-family:'Liberation Sans', sans-serif;font-size:29.5px;line-height:29.5px;font-weight:400;color:#a8a8a8;white-space:pre;transform:scaleX(0.9);transform-origin:100% 50%;-webkit-text-stroke:0.25px currentColor;">85</div>
<div style="position:absolute;left:601.77px;top:1623.73px;font-family:'Liberation Sans', sans-serif;font-size:29.5px;line-height:29.5px;font-weight:400;color:#a8a8a8;white-space:pre;transform:scaleX(0.9);transform-origin:100% 50%;-webkit-text-stroke:0.25px currentColor;">86</div>
<div class="c" style="left:1053.60px;top:1619px;"><span class="m">// Get a new joke</span></div>
<div style="position:absolute;left:601.77px;top:1663.73px;font-family:'Liberation Sans', sans-serif;font-size:29.5px;line-height:29.5px;font-weight:400;color:#a8a8a8;white-space:pre;transform:scaleX(0.9);transform-origin:100% 50%;-webkit-text-stroke:0.25px currentColor;">87</div>
<div class="c" style="left:1053.60px;top:1659px;"><span class="s">Task</span> {</div>
<div style="position:absolute;left:601.77px;top:1703.73px;font-family:'Liberation Sans', sans-serif;font-size:29.5px;line-height:29.5px;font-weight:400;color:#a8a8a8;white-space:pre;transform:scaleX(0.9);transform-origin:100% 50%;-webkit-text-stroke:0.25px currentColor;">88</div>
<div class="c" style="left:1127.72px;top:1699px;"><span class="k">await</span> <span class="p">viewModel</span>.<span class="p">fetchJoke</span>()</div>
<div style="position:absolute;left:601.77px;top:1743.73px;font-family:'Liberation Sans', sans-serif;font-size:29.5px;line-height:29.5px;font-weight:400;color:#a8a8a8;white-space:pre;transform:scaleX(0.9);transform-origin:100% 50%;-webkit-text-stroke:0.25px currentColor;">89</div>
<div class="c" style="left:1053.60px;top:1739px;">}</div>
<div style="position:absolute;left:601.77px;top:1783.73px;font-family:'Liberation Sans', sans-serif;font-size:29.5px;line-height:29.5px;font-weight:400;color:#a8a8a8;white-space:pre;transform:scaleX(0.9);transform-origin:100% 50%;-webkit-text-stroke:0.25px currentColor;">90</div>
<div style="position:absolute;left:601.77px;top:1823.73px;font-family:'Liberation Sans', sans-serif;font-size:29.5px;line-height:29.5px;font-weight:400;color:#a8a8a8;white-space:pre;transform:scaleX(0.9);transform-origin:100% 50%;-webkit-text-stroke:0.25px currentColor;">91</div>
<div class="c" style="left:1053.60px;top:1819px;"><span class="m">// Restart timer</span></div>
<div style="position:absolute;left:644px;top:268px;width:14px;height:1562px;overflow:hidden;mix-blend-mode:multiply;"><div style="position:absolute;left:0;top:0px;width:14px;height:1564px;background:#b1b1b1;border-radius:0 0 0 0;"></div><div style="position:absolute;left:0;top:0px;width:14px;height:188px;background:#9f9f9f;border-radius:0 0 7px 7px;box-shadow:0 0 0 1.6px rgba(225,225,225,.95);"></div><div style="position:absolute;left:0;top:0px;width:14px;height:67px;background:#8f8f8f;border-radius:0 0 7px 7px;box-shadow:0 0 0 1.6px rgba(225,225,225,.95);"></div><div style="position:absolute;left:0;top:310.5px;width:14px;height:436.5px;background:#9f9f9f;border-radius:7px 7px 7px 7px;box-shadow:0 0 0 1.6px rgba(225,225,225,.95);"></div><div style="position:absolute;left:0;top:649.3px;width:14px;height:1.2000000000000455px;background:#e4e4e4;border-radius:0 0 0 0;"></div><div style="position:absolute;left:0;top:990.5px;width:14px;height:573.5px;background:#9f9f9f;border-radius:7px 7px 0 0;box-shadow:0 0 0 1.6px rgba(225,225,225,.95);"></div><div style="position:absolute;left:0;top:1110.5px;width:14px;height:197.0px;background:#8f8f8f;border-radius:7px 7px 7px 7px;box-shadow:0 0 0 1.6px rgba(225,225,225,.95);"></div><div style="position:absolute;left:0;top:1390.5px;width:14px;height:117.5px;background:#8f8f8f;border-radius:7px 7px 7px 7px;box-shadow:0 0 0 1.6px rgba(225,225,225,.95);"></div></div>
<div style="position:absolute;left:546px;top:1832px;width:2478px;height:56px;background:#ffffff;"></div>
<div style="position:absolute;left:546px;top:1830px;width:2478px;height:2px;background:#e0e0e0;"></div>
<div style="position:absolute;left:546px;top:190px;width:1698px;height:78px;background:#f3f3f3;"></div>
<div style="position:absolute;left:546px;top:228px;width:1698px;height:2px;background:#e1e1e1;"></div>
<div style="position:absolute;left:546px;top:267.5px;width:1698px;height:2px;background:#dcdcdc;"></div>
<div style="position:absolute;left:546px;top:269.5px;width:1698px;height:22px;background:linear-gradient(180deg,rgba(0,0,0,0.075),rgba(0,0,0,0.025) 40%,rgba(0,0,0,0));"></div>
<div style="position:absolute;left:601.77px;top:197.03px;font-family:'Liberation Sans', sans-serif;font-size:29.5px;line-height:29.5px;font-weight:400;color:#a2a2a2;white-space:pre;transform:scaleX(0.9);transform-origin:100% 50%;-webkit-text-stroke:0.25px currentColor;">10</div>
<div style="position:absolute;left:601.77px;top:236.63px;font-family:'Liberation Sans', sans-serif;font-size:29.5px;line-height:29.5px;font-weight:400;color:#a2a2a2;white-space:pre;transform:scaleX(0.9);transform-origin:100% 50%;-webkit-text-stroke:0.25px currentColor;">33</div>
<div class="c" style="left:683.00px;top:191.9px;"><span class="k">struct</span> <span class="t">JokeView</span>: <span class="s">View</span> {</div>
<div class="c" style="left:757.12px;top:231.6px;"><span class="k">var</span> <span class="d">body</span>: <span class="k">some</span> <span class="s">View</span> {</div>
<div style="position:absolute;left:2244px;top:190px;width:32px;height:1640px;background:#fafafa;"></div>
<div style="position:absolute;left:2244px;top:190px;width:2px;height:1640px;background:#eaeaea;"></div>
<div style="position:absolute;left:2272px;top:190px;width:4px;height:1640px;background:#e9e9e9;"></div>
<div style="position:absolute;left:2252.5px;top:737px;width:14.5px;height:493px;background:#7f7f7f;border-radius:7.5px;"></div>
<svg style="position:absolute;left:566px;top:1848px;" width="36" height="24" viewBox="566 1848 36 24"><path d="M572.5 1851H592.2Q594.4 1851 595.6 1852.6L598.8 1857.6Q600 1859.8 598.8 1862L595.6 1867Q594.4 1868.8 592.2 1868.8H572.5Q568.8 1868.8 568.8 1865.2V1854.6Q568.8 1851 572.5 1851Z" fill="#3478f6"/></svg>
<div style="position:absolute;left:2276px;top:190px;width:748px;height:1640px;background:#f1f1f1;"></div>
<div style="position:absolute;left:2300px;top:213.6px;width:63.2px;height:52.3px;background:#ffffff;border-radius:12px;box-shadow:0 1px 5px rgba(0,0,0,.16),0 0 1px rgba(0,0,0,.18);"></div>
<svg style="position:absolute;left:2316px;top:220px;" width="32" height="40" viewBox="2316 220 32 40"><path d="M2323.6 225.6H2338.6L2334.6 231V238.4Q2340 240.4 2340.3 244.6H2321.9Q2322.2 240.4 2327.6 238.4V231Z" fill="none" stroke="#4a4a4a" stroke-width="2.2" stroke-linejoin="round" stroke-linecap="round"/><path d="M2331.1 245V254" stroke="#4a4a4a" stroke-width="2.2" stroke-linecap="round"/></svg>
<div style="position:absolute;left:2382.8px;top:213.6px;width:167.5px;height:52.3px;background:#cfdffc;border-radius:12px;box-shadow:0 1px 5px rgba(0,0,0,.16),0 0 1px rgba(0,0,0,.18);"></div>
<svg style="position:absolute;left:2396px;top:222px;" width="32" height="34" viewBox="2396 222 32 34"><rect x="2401.9" y="235.1" width="20" height="15.2" rx="3" fill="none" stroke="#2f7af5" stroke-width="2.2"/><path d="M2404 230.6H2419.8M2406.6 227.4H2417.2" stroke="#2f7af5" stroke-width="1.7" stroke-linecap="round"/></svg>
<div style="position:absolute;left:2435.80px;top:229.08px;font-family:'Liberation Sans', sans-serif;font-size:22px;line-height:22px;font-weight:400;color:#2f7af5;white-space:pre;letter-spacing:0.319px;-webkit-text-stroke:0.22px currentColor;">JokeView</div>
<svg style="position:absolute;left:2316px;top:336px;" width="668" height="1348" viewBox="2316 336 668 1348"><rect x="2323.2" y="577.6" width="12" height="46.6" rx="2.5" fill="#2b2b2b"/><rect x="2323.2" y="667" width="12" height="91.6" rx="2.5" fill="#2b2b2b"/><rect x="2323.2" y="783.6" width="12" height="91.6" rx="2.5" fill="#2b2b2b"/><rect x="2964" y="727.6" width="12" height="145.6" rx="2.5" fill="#2b2b2b"/><rect x="2331.2" y="344" width="637.6" height="1332" rx="121" fill="#2c2c2c"/><rect x="2340.0" y="352.8" width="620.0" height="1314.4" rx="112" fill="#000"/><rect x="2353.8" y="367" width="592" height="1285.6" rx="98" fill="#fff"/><rect x="2557.8" y="387.4" width="184.4" height="53.8" rx="26.9" fill="#000"/></svg>
<div style="position:absolute;left:2380.45px;top:771.59px;font-family:'Liberation Sans', sans-serif;font-size:39px;line-height:39px;font-weight:400;color:#000;white-space:pre;letter-spacing:0.262px;">What are the strongest days of</div>
<div style="position:absolute;left:2560.60px;top:821.19px;font-family:'Liberation Sans', sans-serif;font-size:39px;line-height:39px;font-weight:400;color:#000;white-space:pre;letter-spacing:0.075px;">the week?</div>
<div style="position:absolute;left:2382.95px;top:1034.49px;font-family:'Liberation Sans', sans-serif;font-size:39px;line-height:39px;font-weight:400;color:#000;white-space:pre;letter-spacing:-0.038px;">Saturday and Sunday...the rest</div>
<div style="position:absolute;left:2525.30px;top:1084.29px;font-family:'Liberation Sans', sans-serif;font-size:39px;line-height:39px;font-weight:400;color:#000;white-space:pre;letter-spacing:-0.206px;">are weekdays.</div>
<div style="position:absolute;left:2558.8px;top:1153.2px;width:182.7px;height:50.3px;background:#e9e9eb;border-radius:9.5px;"></div>
<div style="position:absolute;left:2577.40px;top:1166.96px;font-family:'Liberation Sans', sans-serif;font-size:24.5px;line-height:24.5px;font-weight:400;color:#bdbdc1;white-space:pre;letter-spacing:0.068px;-webkit-text-stroke:0.22px currentColor;">Save for later</div>
<div style="position:absolute;left:2577.2px;top:1245px;width:145.6px;height:50.4px;background:#3478f6;border-radius:9.5px;"></div>
<div style="position:absolute;left:2596.30px;top:1258.66px;font-family:'Liberation Sans', sans-serif;font-size:24.5px;line-height:24.5px;font-weight:400;color:#ffffff;white-space:pre;letter-spacing:0.032px;-webkit-text-stroke:0.22px currentColor;">New Joke</div>
<div style="position:absolute;left:2299.6px;top:1753.7px;width:163.6px;height:52.3px;background:#ffffff;border-radius:12.5px;box-shadow:0 1px 5px rgba(0,0,0,.16),0 0 1px rgba(0,0,0,.18);"></div>
<div style="position:absolute;left:2482.9px;top:1753.7px;width:63.3px;height:52.3px;background:#ffffff;border-radius:12.5px;box-shadow:0 1px 5px rgba(0,0,0,.16),0 0 1px rgba(0,0,0,.18);"></div>
<div style="position:absolute;left:2565.9px;top:1753.7px;width:54.2px;height:52.3px;background:#ffffff;border-radius:12.5px;box-shadow:0 1px 5px rgba(0,0,0,.16),0 0 1px rgba(0,0,0,.18);"></div>
<div style="position:absolute;left:2792.2px;top:1753.7px;width:208.1px;height:52.3px;background:#ffffff;border-radius:12.5px;box-shadow:0 1px 5px rgba(0,0,0,.16),0 0 1px rgba(0,0,0,.18);"></div>
<svg style="position:absolute;left:2316px;top:1765px;" width="30" height="30" viewBox="2316 1765 30 30"><circle cx="2331" cy="1780" r="13.1" fill="#3478f6"/><path d="M2327.7 1774.4L2337.6 1780L2327.7 1785.6Z" fill="#fff" stroke="#fff" stroke-width="1.6" stroke-linejoin="round"/></svg>
<svg style="position:absolute;left:2362px;top:1764px;" width="32" height="32" viewBox="2362 1764 32 32"><rect x="2367.4" y="1769.3" width="20.9" height="20.9" rx="3.6" fill="none" stroke="#4a4a4a" stroke-width="2.3"/><path d="M2374.2 1773V1785.2L2376.9 1782.7L2379 1787.4L2381.1 1786.4L2379 1781.9H2382.8Z" fill="#4a4a4a"/></svg>
<svg style="position:absolute;left:2416px;top:1766px;" width="32" height="28" viewBox="2416 1766 32 28"><rect x="2420.9" y="1771.4" width="3.9" height="5.9" rx="1.1" fill="none" stroke="#4a4a4a" stroke-width="1.6"/><rect x="2420.9" y="1783.2" width="3.9" height="5.9" rx="1.1" fill="none" stroke="#4a4a4a" stroke-width="1.6"/><rect x="2429.7" y="1771.4" width="3.9" height="5.9" rx="1.1" fill="none" stroke="#4a4a4a" stroke-width="1.6"/><rect x="2429.7" y="1783.2" width="3.9" height="5.9" rx="1.1" fill="none" stroke="#4a4a4a" stroke-width="1.6"/><rect x="2438.5" y="1771.4" width="3.9" height="5.9" rx="1.1" fill="none" stroke="#4a4a4a" stroke-width="1.6"/><rect x="2438.5" y="1783.2" width="3.9" height="5.9" rx="1.1" fill="none" stroke="#4a4a4a" stroke-width="1.6"/></svg>
<svg style="position:absolute;left:2498px;top:1764px;" width="32" height="32" viewBox="2498 1764 32 32"><rect x="2503.1" y="1769.3" width="22.2" height="8.9" rx="4.45" fill="none" stroke="#4a4a4a" stroke-width="2.1"/><circle cx="2508" cy="1773.75" r="2.3" fill="#4a4a4a"/><rect x="2502" y="1782" width="24.4" height="11" rx="5.5" fill="#4a4a4a"/><circle cx="2520.6" cy="1787.5" r="3.1" fill="#fff"/></svg>
<svg style="position:absolute;left:2582px;top:1765px;" width="22" height="30" viewBox="2582 1765 22 30"><rect x="2587" y="1770" width="12" height="20.5" rx="2.6" fill="#d4d4d4" stroke="#4a4a4a" stroke-width="2"/><path d="M2591.2 1773h3.6M2590.6 1787.6h4.8" stroke="#4a4a4a" stroke-width="1.3" stroke-linecap="round"/></svg>
<svg style="position:absolute;left:2805.5px;top:1762px;" width="34" height="34" viewBox="2805.5 1762 34 34"><circle cx="2821.5" cy="1777.5" r="9.3" fill="none" stroke="#4a4a4a" stroke-width="2.5"/><path d="M2828.4 1784.4L2834.5 1790.5" stroke="#4a4a4a" stroke-width="3.1" stroke-linecap="round"/><path d="M2817 1777.5h9" stroke="#4a4a4a" stroke-width="1.9" stroke-linecap="round"/></svg>
<svg style="position:absolute;left:2853.3px;top:1762px;" width="34" height="34" viewBox="2853.3 1762 34 34"><circle cx="2869.3" cy="1777.5" r="9.3" fill="none" stroke="#4a4a4a" stroke-width="2.5"/><path d="M2876.2000000000003 1784.4L2882.3 1790.5" stroke="#4a4a4a" stroke-width="3.1" stroke-linecap="round"/></svg>
<div style="position:absolute;left:2865.46px;top:1770.33px;font-family:'Liberation Sans', sans-serif;font-size:14.5px;line-height:14.5px;font-weight:700;color:#4a4a4a;white-space:pre;">1</div>
<svg style="position:absolute;left:2901.3px;top:1762px;" width="34" height="34" viewBox="2901.3 1762 34 34"><circle cx="2917.3" cy="1777.5" r="9.3" fill="none" stroke="#7e7e7e" stroke-width="2.5"/><path d="M2924.2000000000003 1784.4L2930.3 1790.5" stroke="#7e7e7e" stroke-width="3.1" stroke-linecap="round"/><rect x="2913.6" y="1773.8" width="7.4" height="7.4" rx="1.3" fill="none" stroke="#7e7e7e" stroke-width="1.8"/></svg>
<svg style="position:absolute;left:2949.4px;top:1762px;" width="34" height="34" viewBox="2949.4 1762 34 34"><circle cx="2965.4" cy="1777.5" r="9.3" fill="none" stroke="#4a4a4a" stroke-width="2.5"/><path d="M2972.3 1784.4L2978.4 1790.5" stroke="#4a4a4a" stroke-width="3.1" stroke-linecap="round"/><path d="M2961 1777.5h8.8M2965.4 1773.1v8.8" stroke="#4a4a4a" stroke-width="1.9" stroke-linecap="round"/></svg>
<div style="position:absolute;left:2761.00px;top:1849.38px;font-family:'Liberation Sans', sans-serif;font-size:22px;line-height:22px;font-weight:400;color:#7b7b7b;white-space:pre;letter-spacing:0.873px;-webkit-text-stroke:0.45px #7b7b7b;">Line: 75  Col: 44</div>
<div style="position:absolute;left:2954px;top:1848.5px;width:2px;height:23.5px;background:#dedede;"></div>
<svg style="position:absolute;left:2970px;top:1844px;" width="32" height="32" viewBox="2970 1844 32 32"><rect x="2974.3" y="1848.3" width="23.4" height="23.2" rx="4.2" fill="none" stroke="#7b7b7b" stroke-width="2"/><rect x="2977.2" y="1863" width="17.6" height="5.8" rx="1.6" fill="#7b7b7b"/></svg>
</body></html>
